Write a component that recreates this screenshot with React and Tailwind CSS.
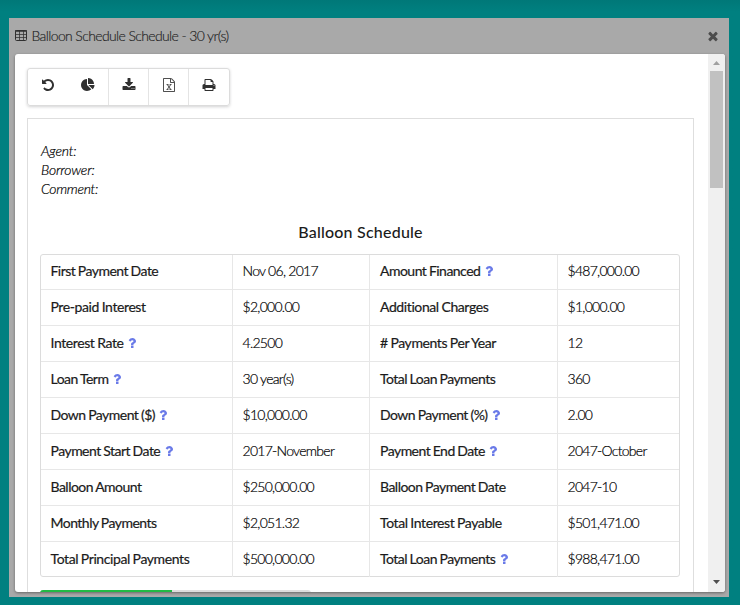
const PATHS = {
  undo: "M1664 896q0 156-61 298t-164 245-245 164-298 61q-172 0-327-72.5t-264-204.5q-7-10-6.5-22.5t8.5-20.5l137-138q10-9 25-9 16 2 23 12 73 95 179 147t225 52q104 0 198.5-40.5t163.5-109.5 109.5-163.5 40.5-198.5-40.5-198.5-109.5-163.5-163.5-109.5-198.5-40.5q-98 0-188 35.5t-160 101.5l137 138q31 30 14 69-17 40-59 40h-448q-26 0-45-19t-19-45v-448q0-42 40-59 39-17 69 14l130 129q107-101 244.5-156.5t284.5-55.5q156 0 298 61t245 164 164 245 61 298z",
  pie: "M768 890l546 546q-106 108-247.5 168t-298.5 60q-209 0-385.5-103t-279.5-279.5-103-385.5 103-385.5 279.5-279.5 385.5-103v762zm187 6h773q0 157-60 298.5t-168 247.5zm709-128h-768v-768q209 0 385.5 103t279.5 279.5 103 385.5z",
  download: "M1344 1344q0-26-19-45t-45-19-45 19-19 45 19 45 45 19 45-19 19-45zm256 0q0-26-19-45t-45-19-45 19-19 45 19 45 45 19 45-19 19-45zm128-224v320q0 40-28 68t-68 28h-1472q-40 0-68-28t-28-68v-320q0-40 28-68t68-28h465l135 136q58 56 136 56t136-56l136-136h464q40 0 68 28t28 68zm-325-569q17 41-14 70l-448 448q-18 19-45 19t-45-19l-448-448q-31-29-14-70 17-39 59-39h256v-448q0-26 19-45t45-19h256q26 0 45 19t19 45v448h256q42 0 59 39z",
  excel: "M1596 380q28 28 48 76t20 88v1152q0 40-28 68t-68 28h-1344q-40 0-68-28t-28-68v-1600q0-40 28-68t68-28h896q40 0 88 20t76 48zm-444-244v376h376q-10-29-22-41l-313-313q-12-12-41-22zm384 1528v-1024h-416q-40 0-68-28t-28-68v-416h-768v1536h1280zm-979-234v106h281v-106h-75l103-161q5-7 10-16.5t7.5-13.5 3.5-4h2q1 4 5 10 2 4 4.5 7.5t6 8 6.5 8.5l107 161h-76v106h291v-106h-68l-192-273 195-282h67v-107h-279v107h74l-103 159q-4 7-10 16.5t-9 13.5l-2 3h-2q-1-4-5-10-6-11-17-23l-106-159h76v-107h-290v107h68l189 272-194 283h-68z",
  print: "M448 1536h896v-256h-896v256zm0-640h896v-384h-160q-40 0-68-28t-28-68v-160h-640v640zm1152 64q0-26-19-45t-45-19-45 19-19 45 19 45 45 19 45-19 19-45zm128 0v416q0 13-9.5 22.5t-22.5 9.5h-224v160q0 40-28 68t-68 28h-960q-40 0-68-28t-28-68v-160h-224q-13 0-22.5-9.5t-9.5-22.5v-416q0-79 56.5-135.5t135.5-56.5h64v-544q0-40 28-68t68-28h672q40 0 88 20t76 48l152 152q28 28 48 76t20 88v256h64q79 0 135.5 56.5t56.5 135.5z",
  close: "M1490 1322q0 40-28 68l-136 136q-28 28-68 28t-68-28l-294-294-294 294q-28 28-68 28t-68-28l-136-136q-28-28-28-68t28-68l294-294-294-294q-28-28-28-68t28-68l136-136q28-28 68-28t68 28l294 294 294-294q28-28 68-28t68 28l136 136q28 28 28 68t-28 68l-294 294 294 294q28 28 28 68z",
  question: "M1088 1256v240q0 16-12 28t-28 12h-240q-16 0-28-12t-12-28v-240q0-16 12-28t28-12h240q16 0 28 12t12 28zm316-600q0 54-15.5 101t-35 76.5-55 59.5-57.5 43.5-61 35.5q-41 23-68.5 65t-27.5 67q0 17-12 32.5t-28 15.5h-240q-15 0-25.5-18.5t-10.5-37.5v-45q0-83 65-156.5t143-108.5q59-27 84-56t25-76q0-42-46.5-74t-107.5-32q-65 0-108 29-35 25-107 115-13 16-31 16-12 0-25-8l-164-125q-13-10-15.5-25t5.5-28q160-266 464-266 80 0 161 31t146 83 106 127.5 41 158.5z",
};

function Icon({ name, className = "" }) {
  return (
    <svg viewBox="0 0 1792 1792" fill="currentColor" className={`size-3.5 shrink-0 ${className}`}>
      <path d={PATHS[name]} />
    </svg>
  );
}

function TableIcon() {
  return (
    <svg viewBox="0 0 13 12" className="h-3 w-[13px] shrink-0 text-[#303030]" fill="none" stroke="currentColor">
      <rect x="0.5" y="0.5" width="11" height="10" rx="1" />
      <path d="M0 1h12" strokeWidth="1.5" />
      <path d="M1 4.5h11M1 7.5h11M4.5 1v10M8.5 1v10" strokeOpacity="0.75" />
    </svg>
  );
}

// Each row: label, has help mark, value, label, has help mark, value
const ROWS = [
  ["First Payment Date", false, "Nov 06, 2017", "Amount Financed", true, "$487,000.00"],
  ["Pre-paid Interest", false, "$2,000.00", "Additional Charges", false, "$1,000.00"],
  ["Interest Rate", true, "4.2500", "# Payments Per Year", false, "12"],
  ["Loan Term", true, "30 year(s)", "Total Loan Payments", false, "360"],
  ["Down Payment ($)", true, "$10,000.00", "Down Payment (%)", true, "2.00"],
  ["Payment Start Date", true, "2017-November", "Payment End Date", true, "2047-October"],
  ["Balloon Amount", false, "$250,000.00", "Balloon Payment Date", false, "2047-10"],
  ["Monthly Payments", false, "$2,051.32", "Total Interest Payable", false, "$501,471.00"],
  ["Total Principal Payments", false, "$500,000.00", "Total Loan Payments", true, "$988,471.00"],
];

const TIGHT = new Set([
  "First Payment Date",
  "Loan Term",
  "Down Payment ($)",
  "Down Payment (%)",
  "Payment Start Date",
  "Payment End Date",
  "Balloon Amount",
  "Balloon Payment Date",
  "Monthly Payments",
  "Amount Financed",
  "Total Loan Payments",
]);

function Label({ text, help, first }) {
  return (
    <div className={`flex items-center pb-0.5 ${first ? "pl-[9.5px]" : "border-l border-[#e7e7e7] pl-2.5"}`}>
      <span
        className={`[-webkit-text-stroke:0.2px] [word-spacing:-0.5px] ${TIGHT.has(text) ? "tracking-[-0.52px]" : "tracking-[-0.4px]"}`}
      >
        {text}
      </span>
      {help && <Icon name="question" className="ml-[1.5px] text-[#6a7ae8]" />}
    </div>
  );
}

function Value({ text }) {
  return (
    <div className="flex items-center border-l border-[#e7e7e7] pb-0.5 pl-[9.5px] font-light tracking-[-0.72px] text-black [-webkit-text-stroke:0.2px]">
      {text}
    </div>
  );
}

const TOOLS = ["undo", "pie", "download", "excel", "print"];

export default function App() {
  return (
    <div className="h-[605px] w-[740px] overflow-hidden bg-[#008080] bg-linear-to-b from-[#007878] to-[#008080] to-[12px] pt-[18px] pl-[9px] font-['Lato',sans-serif] text-sm text-[#1b1b1b]">
      <div className="flex h-[579px] w-[720px] flex-col bg-[#a9a9a9] pr-1 pl-1.5">
        <div className="flex h-9 shrink-0 items-center pr-[5px] pb-px">
          <TableIcon />
          <span className="ml-[3.5px] font-light tracking-[-0.62px] text-[#222222] [-webkit-text-stroke:0.15px]">
            Balloon Schedule Schedule - 30 yr(s)
          </span>
          <Icon name="close" className="ml-auto text-[#4c4c4c]" />
        </div>

        <div className="flex h-[538px] w-[710px] overflow-hidden rounded-[3px] bg-white shadow-[0_1px_3px_rgba(0,0,0,0.4)]">
          <div className="flex h-[538px] w-[693px] flex-col overflow-hidden pt-3.5 pl-3">
            <div className="flex h-[38px] w-[203px] shrink-0 rounded-[3px] border border-[#dcdcdc] shadow-[0_1px_3px_rgba(34,36,38,0.2)]">
              {TOOLS.map((name, i) => (
                <div
                  key={name}
                  className={`flex w-10 items-center justify-center pb-1 ${i > 1 ? "border-l border-[#e4e4e4]" : ""}`}
                >
                  <Icon name={name} className={name === "excel" ? "text-[#505050]" : "text-[#303030]"} />
                </div>
              ))}
            </div>

            <div className="mt-3 h-[600px] w-[667px] shrink-0 border border-[#dedede] px-3 pt-[22px]">
              <div className="pl-px font-light leading-[19px] tracking-[-0.2px] text-black italic [-webkit-text-stroke:0.2px]">
                <p>Agent:</p>
                <p>Borrower:</p>
                <p className="tracking-[-0.3px]">Comment:</p>
              </div>
              <h1 className="mt-6 text-center text-base leading-5 font-medium tracking-[0.22px]">Balloon Schedule</h1>

              <div className="mt-3 h-[323px] w-[640px] rounded-[3px] border border-[#dcdcdc]">
                {ROWS.map((r, i) => (
                  <div
                    key={i}
                    className={`grid grid-cols-[191px_137px_188px_122px] ${i ? "h-9 border-t border-[#e7e7e7]" : "h-[34px]"}`}
                  >
                    <Label text={r[0]} help={r[1]} first />
                    <Value text={r[2]} />
                    <Label text={r[3]} help={r[4]} />
                    <Value text={r[5]} />
                  </div>
                ))}
              </div>

              <div className="mt-[13px] h-3 w-[271px] overflow-hidden rounded-[3px] bg-[#dddddd]">
                <div className="h-full w-[132px] bg-[#21ba45]" />
              </div>
            </div>
          </div>

          <div className="flex h-[538px] w-[17px] flex-col items-center bg-[#f0f0f0]">
            <svg viewBox="0 0 17 17" className="size-[17px] shrink-0">
              <path d="M5 11L8.5 7L12 11Z" fill="#a0a0a0" />
            </svg>
            <div className="h-[117px] w-[13px] shrink-0 bg-[#c1c1c1]" />
            <svg viewBox="0 0 17 17" className="mt-auto mb-px size-[17px] shrink-0">
              <path d="M5 6L8.5 10L12 6Z" fill="#505050" />
            </svg>
          </div>
        </div>
      </div>
    </div>
  );
}
